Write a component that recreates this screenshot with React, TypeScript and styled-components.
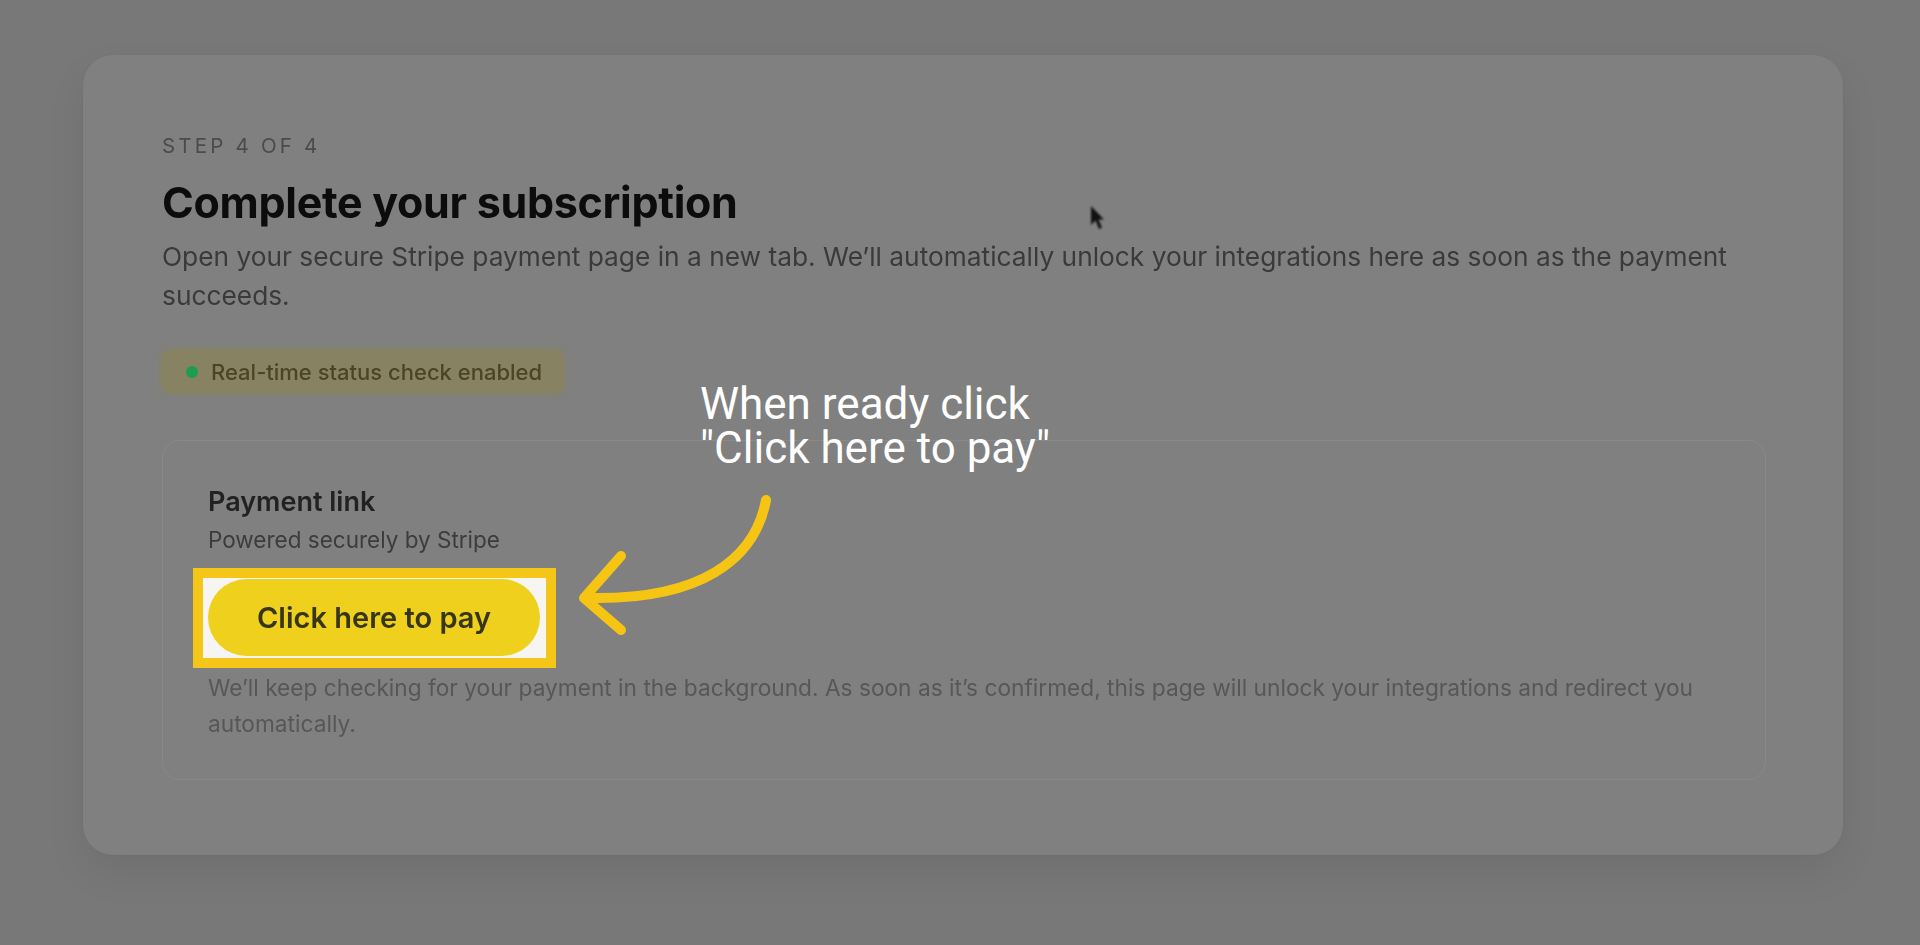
import React from "react";
import styled, { createGlobalStyle, css } from "styled-components";

const GlobalStyle = createGlobalStyle`
  html, body {
    margin: 0;
    padding: 0;
    background: #787878;
    font-family: Inter, "Noto Sans", "Liberation Sans", sans-serif;
  }
  * { box-sizing: border-box; }
`;

// the whole frame is a dimmed, slightly soft video capture
const soft = css`
  filter: blur(0.5px);
`;

const Page = styled.div`
  position: relative;
  width: 1920px;
  height: 945px;
  overflow: hidden;
  padding: 55px 77px 0 83px;
  background: #787878;
`;

const Card = styled.div`
  background: #808080;
  border-radius: 30px;
  box-shadow: 0 18px 40px rgba(0, 0, 0, 0.07), 0 0 0 1px rgba(0, 0, 0, 0.02);
  padding: 79px 77px 75px 79px;
  display: flex;
  flex-direction: column;
`;

const Step = styled.p`
  ${soft};
  margin: 0;
  font-size: 20.5px;
  line-height: 24px;
  letter-spacing: 3.2px;
  text-transform: uppercase;
  color: #4b4b4b;
`;

const Title = styled.h1`
  ${soft};
  margin: 20px 0 0;
  font-size: 43px;
  line-height: 48px;
  font-weight: 700;
  letter-spacing: -0.3px;
  color: #0c0c0c;
`;

const Lead = styled.p`
  ${soft};
  margin: 11px 0 0;
  font-size: 26.3px;
  line-height: 39px;
  color: #3a3a3a;
`;

const Badge = styled.div`
  ${soft};
  align-self: flex-start;
  margin-top: 35px;
  height: 43px;
  display: inline-flex;
  align-items: center;
  gap: 13px;
  padding: 0 21px 0 24px;
  border-radius: 9px;
  background: #878262;
  box-shadow: 0 0 6px 2px rgba(135, 130, 98, 0.8);
  font-size: 22px;
  font-weight: 500;
  color: #4e4327;
`;

const Dot = styled.span`
  width: 12px;
  height: 12px;
  border-radius: 50%;
  background: #1f9d4c;
`;

const Panel = styled.section`
  margin-top: 47px;
  border: 1.5px solid #898989;
  border-radius: 18px;
  padding: 46px 45px 37px;
  display: flex;
  flex-direction: column;
`;

const PanelTitle = styled.h2`
  ${soft};
  margin: 0;
  font-size: 27px;
  line-height: 30px;
  font-weight: 600;
  color: #222;
`;

const PanelSub = styled.p`
  ${soft};
  margin: 9px 0 0;
  font-size: 22.5px;
  line-height: 28px;
  color: #3c3c3c;
`;

const PayWrap = styled.div`
  position: relative;
  align-self: flex-start;
  margin-top: 25px;
`;

// yellow spotlight frame laid over the button
const Spotlight = styled.span`
  position: absolute;
  top: -11px;
  left: -15px;
  right: -16px;
  bottom: -12px;
  border: 10px solid #f4c618;
  background: #f6f5f2;
`;

const PayButton = styled.button`
  ${soft};
  position: relative;
  width: 332px;
  height: 77px;
  border: none;
  border-radius: 40px;
  background: #efd11d;
  font-family: Inter, "Noto Sans", sans-serif;
  font-size: 29px;
  font-weight: 600;
  color: #37351a;
  cursor: pointer;
`;

const Note = styled.p`
  ${soft};
  margin: 14px 0 0;
  font-size: 22.7px;
  line-height: 36px;
  color: #575757;
`;

const Callout = styled.div`
  position: absolute;
  left: 700px;
  top: 382px;
  font-family: Roboto, "Liberation Sans", sans-serif;
  font-size: 44px;
  line-height: 44px;
  color: #ffffff;
  white-space: pre;
`;

const Overlay = styled.svg`
  position: absolute;
  left: 0;
  top: 0;
  pointer-events: none;
`;

const Cursor = styled.svg`
  position: absolute;
  left: 1089px;
  top: 205px;
  filter: blur(0.8px);
`;

export default function App() {
  return (
    <>
      <GlobalStyle />
      <Page>
        <Card>
          <Step>Step 4 of 4</Step>
          <Title>Complete your subscription</Title>
          <Lead>
            Open your secure Stripe payment page in a new tab. We’ll
            automatically unlock your integrations here as soon as the payment
            succeeds.
          </Lead>
          <Badge>
            <Dot />
            Real-time status check enabled
          </Badge>
          <Panel>
            <PanelTitle>Payment link</PanelTitle>
            <PanelSub>Powered securely by Stripe</PanelSub>
            <PayWrap>
              <Spotlight />
              <PayButton>Click here to pay</PayButton>
            </PayWrap>
            <Note>
              We’ll keep checking for your payment in the background. As soon
              as it’s confirmed, this page will unlock your integrations and
              redirect you automatically.
            </Note>
          </Panel>
        </Card>

        <Callout>{'When ready click\n"Click here to pay"'}</Callout>

        <Overlay width="1920" height="945" viewBox="0 0 1920 945">
          <path
            d="M766 500 C 755 560, 700 600, 590 598"
            fill="none"
            stroke="#f6c514"
            strokeWidth="10"
            strokeLinecap="round"
          />
          <path
            d="M621 556 L584 598 L621 630"
            fill="none"
            stroke="#f6c514"
            strokeWidth="10"
            strokeLinecap="round"
            strokeLinejoin="round"
          />
        </Overlay>

        <Cursor width="16" height="26" viewBox="0 0 16 26">
          <path d="M2 1 L2 20 L6.5 15.5 L10 24 L13 22.8 L9.6 14.6 L15 14.6 Z" fill="#111" />
        </Cursor>
      </Page>
    </>
  );
}
